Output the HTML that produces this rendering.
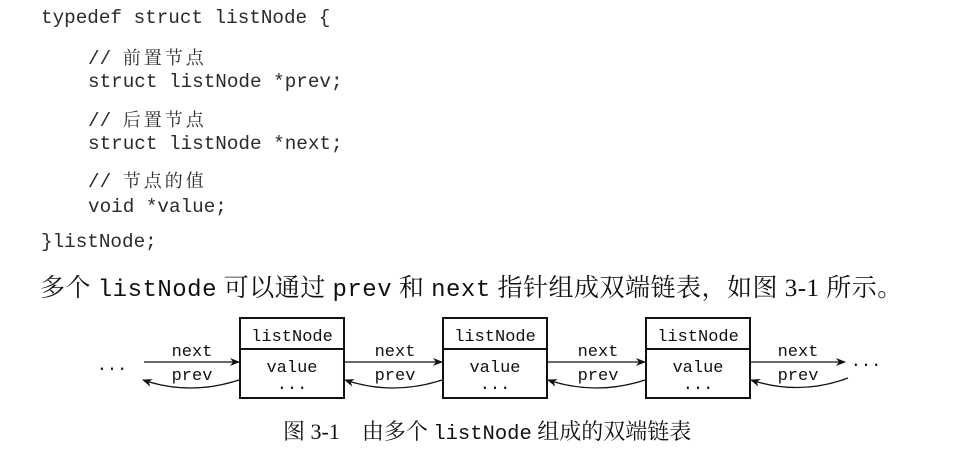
<!DOCTYPE html>
<html><head><meta charset="utf-8"><style>
body{margin:0;width:976px;height:453px;background:#fff;position:relative;overflow:hidden}
.c{position:absolute;font-family:"Liberation Mono","Noto Sans CJK SC",monospace;font-size:19.3px;color:#2a2a2a;white-space:pre;line-height:1}
.cj{font-family:"Noto Serif CJK SC","WenQuanYi Zen Hei",serif;font-size:18px;letter-spacing:3px}
.t{position:absolute;white-space:pre;line-height:1;color:#111;font-family:"Liberation Serif","Noto Serif CJK SC",serif}
.m{font-family:"Liberation Mono",monospace}
</style></head><body>
<div class="c" style="left:41px;top:9px">typedef struct listNode {</div>
<div class="c" style="left:88px;top:48px">// <span class="cj">前置节点</span></div>
<div class="c" style="left:88px;top:73px">struct listNode *prev;</div>
<div class="c" style="left:88px;top:110px">// <span class="cj">后置节点</span></div>
<div class="c" style="left:88px;top:135px">struct listNode *next;</div>
<div class="c" style="left:88px;top:171px">// <span class="cj">节点的值</span></div>
<div class="c" style="left:88px;top:198px">void *value;</div>
<div class="c" style="left:41px;top:233px">}listNode;</div>
<div class="t" style="left:40px;top:276px;font-size:25px;letter-spacing:0.5px">多个 <span class="m" style="font-size:24px">listNode</span> 可以通过 <span class="m" style="font-size:24px">prev</span> 和 <span class="m" style="font-size:24px">next</span> 指针组成双端链表，如图 3-1 所示。</div>
<svg style="position:absolute;left:0;top:0" width="976" height="453">
<defs><marker id="a" markerWidth="10" markerHeight="8" refX="9" refY="4" orient="auto" markerUnits="userSpaceOnUse"><path d="M0,0 L10,4 L0,8 L3,4z" fill="#111"/></marker></defs>
<g fill="none" stroke="#111" stroke-width="2">
<rect x="240" y="318" width="104" height="80"/><line x1="240" y1="349" x2="344" y2="349"/>
<rect x="443" y="318" width="104" height="80"/><line x1="443" y1="349" x2="547" y2="349"/>
<rect x="646" y="318" width="104" height="80"/><line x1="646" y1="349" x2="750" y2="349"/>
</g>
<g fill="none" stroke="#111" stroke-width="1.3">
<line x1="144" y1="362" x2="239" y2="362" marker-end="url(#a)"/>
<line x1="344" y1="362" x2="442" y2="362" marker-end="url(#a)"/>
<line x1="547" y1="362" x2="645" y2="362" marker-end="url(#a)"/>
<line x1="750" y1="362" x2="845" y2="362" marker-end="url(#a)"/>
<path d="M239,380 Q190,396 143,380" marker-end="url(#a)"/>
<path d="M442,380 Q393,396 345,380" marker-end="url(#a)"/>
<path d="M645,380 Q596,396 548,380" marker-end="url(#a)"/>
<path d="M848,378 Q800,396 751,380" marker-end="url(#a)"/>
</g>
<g font-family="'Liberation Mono',monospace" font-size="17" fill="#111" text-anchor="middle">
<text x="292" y="341">listNode</text><text x="495" y="341">listNode</text><text x="698" y="341">listNode</text>
<text x="292" y="372">value</text><text x="495" y="372">value</text><text x="698" y="372">value</text>
<text x="292" y="389">...</text><text x="495" y="389">...</text><text x="698" y="389">...</text>
<text x="192" y="356">next</text><text x="395" y="356">next</text><text x="598" y="356">next</text><text x="798" y="356">next</text>
<text x="192" y="380">prev</text><text x="395" y="380">prev</text><text x="598" y="380">prev</text><text x="798" y="380">prev</text>
<text x="112" y="370">...</text><text x="866" y="366">...</text>
</g>
</svg>
<div class="t" style="left:283px;top:421px;font-size:22px">图 3-1&nbsp;&nbsp;&nbsp;&nbsp;由多个 <span class="m" style="font-size:20.5px">listNode</span> 组成的双端链表</div>
</body></html>
